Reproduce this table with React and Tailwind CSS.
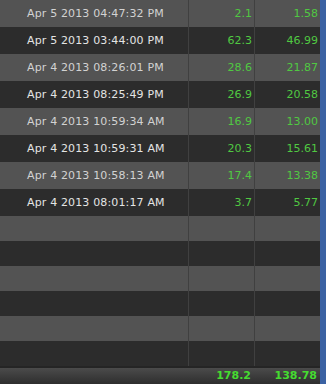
import React from "react";

const rows = [
  { date: "Apr 5 2013 04:47:32 PM", a: "2.1", b: "1.58" },
  { date: "Apr 5 2013 03:44:00 PM", a: "62.3", b: "46.99" },
  { date: "Apr 4 2013 08:26:01 PM", a: "28.6", b: "21.87" },
  { date: "Apr 4 2013 08:25:49 PM", a: "26.9", b: "20.58" },
  { date: "Apr 4 2013 10:59:34 AM", a: "16.9", b: "13.00" },
  { date: "Apr 4 2013 10:59:31 AM", a: "20.3", b: "15.61" },
  { date: "Apr 4 2013 10:58:13 AM", a: "17.4", b: "13.38" },
  { date: "Apr 4 2013 08:01:17 AM", a: "3.7", b: "5.77" },
];

const font = { fontFamily: '"DejaVu Sans", Verdana, sans-serif' };

const Row = ({ light, height, date, a, b }) => (
  <div
    className={`flex ${height} ${
      light ? "bg-[#535353] text-[#d2d2d2]" : "bg-[#2c2c2c] text-[#e4e4e4]"
    }`}
  >
    <div className="w-[188px] flex items-center pl-[27px] pt-px tracking-[0.15px]">{date}</div>
    <div className="w-[66px] flex items-center justify-end pr-[2px] pt-px border-l border-[#404040] text-[#50c842]">
      {a}
    </div>
    <div className="w-[66px] flex items-center justify-end pr-[2px] pt-px border-l border-[#404040] text-[#50c842]">
      {b}
    </div>
  </div>
);

const App = () => {
  return (
    <div className="w-[326px] h-[384px] flex overflow-hidden text-[11px]" style={font}>
      <div className="w-[320px] flex flex-col">
        {rows.map((r, i) => (
          <Row key={i} light={i % 2 === 0} height="h-[27px]" {...r} />
        ))}
        {[0, 1, 2, 3, 4, 5].map((i) => (
          <Row key={"e" + i} light={i % 2 === 0} height="h-[25px]" date="" a="" b="" />
        ))}
        <div className="flex flex-1 border-t-2 border-[#252525] bg-gradient-to-b from-[#4b4b4b] to-[#2e2e2e] font-bold text-[#45dc30]">
          <div className="w-[188px]"></div>
          <div className="w-[66px] flex items-center justify-end pr-[3px]">178.2</div>
          <div className="w-[66px] flex items-center justify-end pr-[3px]">138.78</div>
        </div>
      </div>
      <div className="w-[6px] bg-[#3b62a3]"></div>
    </div>
  );
};

export default App;
